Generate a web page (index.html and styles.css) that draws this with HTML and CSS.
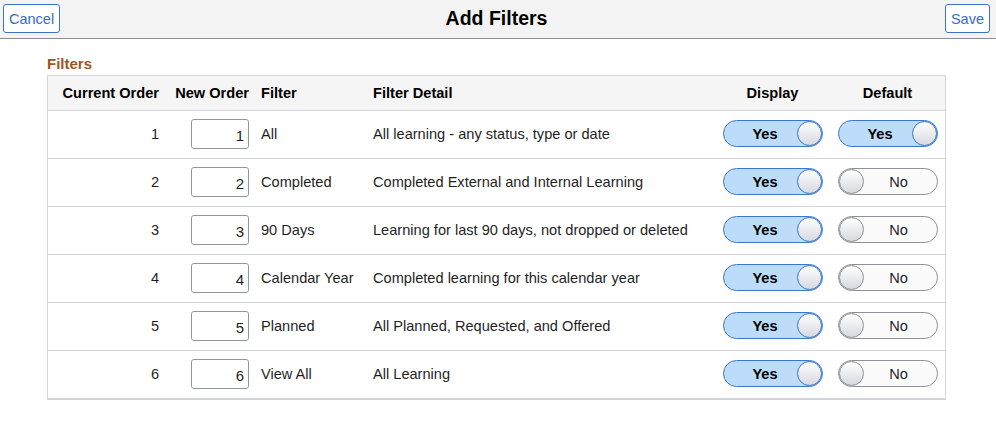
FILE: index.html
```html
<!DOCTYPE html>
<html lang="en">
<head>
<meta charset="utf-8">
<title>Add Filters</title>
<link rel="stylesheet" href="styles.css">
</head>
<body>
<header class="topbar">
  <button class="btn">Cancel</button>
  <h1 class="title">Add Filters</h1>
  <button class="btn btn-save">Save</button>
</header>
<main class="content">
  <h2 class="section-label">Filters</h2>
  <div class="grid">
    <div class="row head">
      <div class="c c-cur">Current Order</div>
      <div class="c c-new">New Order</div>
      <div class="c c-filter">Filter</div>
      <div class="c c-detail">Filter Detail</div>
      <div class="c c-tog">Display</div>
      <div class="c c-tog">Default</div>
    </div>
    <div class="row">
      <div class="c c-cur">1</div>
      <div class="c c-new"><input class="num" value="1"></div>
      <div class="c c-filter">All</div>
      <div class="c c-detail">All learning - any status, type or date</div>
      <div class="c c-tog"><span class="toggle on"><span class="lbl">Yes</span><span class="knob"></span></span></div>
      <div class="c c-tog"><span class="toggle on"><span class="lbl">Yes</span><span class="knob"></span></span></div>
    </div>
    <div class="row">
      <div class="c c-cur">2</div>
      <div class="c c-new"><input class="num" value="2"></div>
      <div class="c c-filter">Completed</div>
      <div class="c c-detail">Completed External and Internal Learning</div>
      <div class="c c-tog"><span class="toggle on"><span class="lbl">Yes</span><span class="knob"></span></span></div>
      <div class="c c-tog"><span class="toggle off"><span class="knob"></span><span class="lbl">No</span></span></div>
    </div>
    <div class="row">
      <div class="c c-cur">3</div>
      <div class="c c-new"><input class="num" value="3"></div>
      <div class="c c-filter">90 Days</div>
      <div class="c c-detail">Learning for last 90 days, not dropped or deleted</div>
      <div class="c c-tog"><span class="toggle on"><span class="lbl">Yes</span><span class="knob"></span></span></div>
      <div class="c c-tog"><span class="toggle off"><span class="knob"></span><span class="lbl">No</span></span></div>
    </div>
    <div class="row">
      <div class="c c-cur">4</div>
      <div class="c c-new"><input class="num" value="4"></div>
      <div class="c c-filter">Calendar Year</div>
      <div class="c c-detail">Completed learning for this calendar year</div>
      <div class="c c-tog"><span class="toggle on"><span class="lbl">Yes</span><span class="knob"></span></span></div>
      <div class="c c-tog"><span class="toggle off"><span class="knob"></span><span class="lbl">No</span></span></div>
    </div>
    <div class="row">
      <div class="c c-cur">5</div>
      <div class="c c-new"><input class="num" value="5"></div>
      <div class="c c-filter">Planned</div>
      <div class="c c-detail">All Planned, Requested, and Offered</div>
      <div class="c c-tog"><span class="toggle on"><span class="lbl">Yes</span><span class="knob"></span></span></div>
      <div class="c c-tog"><span class="toggle off"><span class="knob"></span><span class="lbl">No</span></span></div>
    </div>
    <div class="row last">
      <div class="c c-cur">6</div>
      <div class="c c-new"><input class="num" value="6"></div>
      <div class="c c-filter">View All</div>
      <div class="c c-detail">All Learning</div>
      <div class="c c-tog"><span class="toggle on"><span class="lbl">Yes</span><span class="knob"></span></span></div>
      <div class="c c-tog"><span class="toggle off"><span class="knob"></span><span class="lbl">No</span></span></div>
    </div>
  </div>
</main>
</body>
</html>
```

FILE: styles.css
```css
* { box-sizing: border-box; }
html, body {
  margin: 0;
  padding: 0;
  background: #ffffff;
  font-family: "Liberation Sans", Arial, sans-serif;
  font-size: 14.6px;
  color: #1f1f1f;
}
.topbar {
  height: 39px;
  background: #f3f3f3;
  border-bottom: 1px solid #8a8d91;
  display: grid;
  grid-template-columns: 1fr auto 1fr;
  align-items: center;
  padding: 0 6px 1px 3px;
}
.btn {
  justify-self: start;
  height: 29px;
  padding: 0 5px;
  background: #ffffff;
  border: 1px solid #3d74c9;
  border-radius: 3px;
  color: #3a6cc4;
  font-family: "Liberation Sans", Arial, sans-serif;
  font-size: 14.5px;
}
.btn-save { justify-self: end; }
.title {
  margin: 0;
  font-size: 19.5px;
  font-weight: bold;
  color: #000;
}
.content {
  padding: 0 50px 0 47px;
}
.section-label {
  margin: 16px 0 2px 0;
  font-size: 15px;
  line-height: 18px;
  font-weight: bold;
  color: #a0561e;
}
.grid {
  width: 899px;
  border: 1px solid #d3d6db;
  border-bottom: 2px solid #cfd2d7;
}
.row {
  display: grid;
  grid-template-columns: 119px 88px 112px 348px 115px 1fr;
  height: 48px;
  align-items: center;
  border-top: 1px solid #d3d6db;
  padding-bottom: 2px;
}
.row.head {
  height: 34px;
  border-top: none;
  background: #f5f5f5;
  font-weight: bold;
  color: #000;
  padding-bottom: 1px;
}
.c { white-space: nowrap; }
.c-cur { text-align: right; padding-right: 8px; }
.c-new { text-align: right; padding-right: 6px; }
.c-filter { padding-left: 6px; }
.c-detail { padding-left: 6px; }
.c-tog { display: flex; justify-content: center; }
.num {
  width: 58px;
  height: 30px;
  border: 1px solid #8f959c;
  border-radius: 3px;
  text-align: right;
  padding: 3px 4px 0 4px;
  font-family: "Liberation Sans", Arial, sans-serif;
  font-size: 15px;
  color: #1f1f1f;
  background: #fff;
}
.toggle {
  width: 100px;
  height: 27px;
  border-radius: 14px;
  display: flex;
  align-items: center;
  padding: 0;
}
.toggle.on {
  background: #bcdcf9;
  border: 1px solid #3b77d0;
}
.toggle.off {
  background: #fbfbfb;
  border: 1px solid #8e9297;
}
.lbl {
  flex: 1;
  text-align: center;
}
.toggle.on .lbl { font-weight: bold; color: #000; padding-left: 10px; }
.toggle.off .lbl { color: #1f1f1f; padding-right: 3px; }
.knob {
  width: 25px;
  height: 25px;
  border-radius: 50%;
  background: linear-gradient(#ffffff, #d6d9de);
}
.toggle.on .knob { border: 1px solid #3b77d0; }
.toggle.off .knob { border: 1px solid #8e9297; }
```
